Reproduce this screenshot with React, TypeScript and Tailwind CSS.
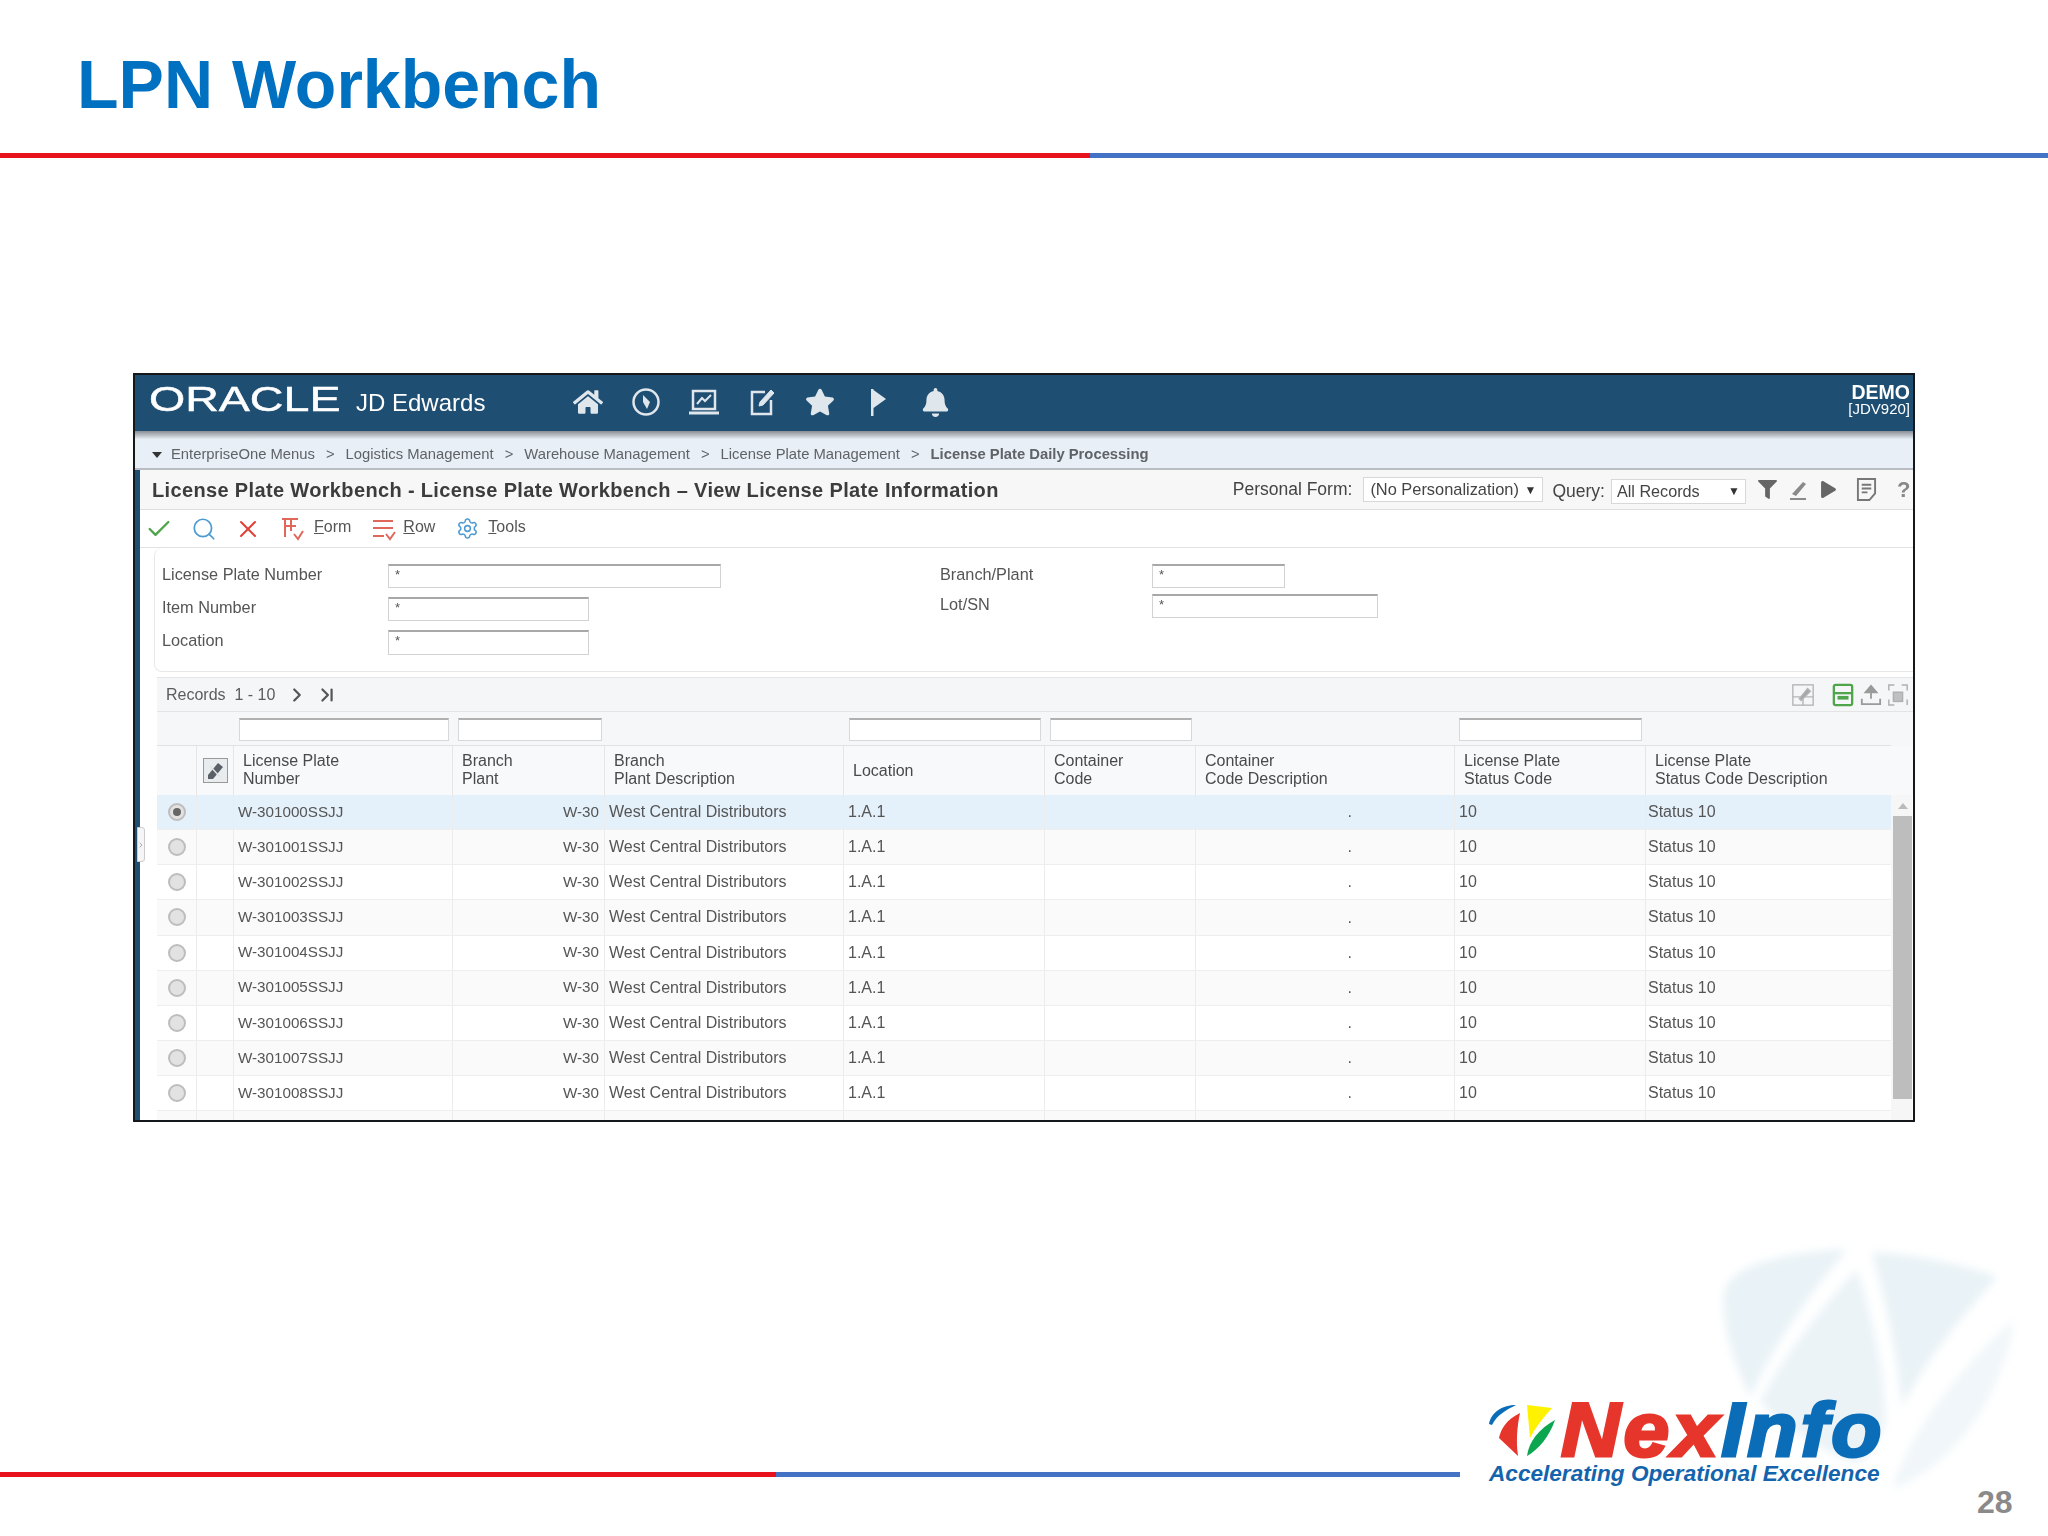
import { Check, ChevronLast, ChevronRight, Search, Settings, X } from "lucide-react";
import { FaBell, FaFilter, FaHome, FaPlay, FaStar } from "react-icons/fa";

const crumbs = [
  "EnterpriseOne Menus",
  "Logistics Management",
  "Warehouse Management",
  "License Plate Management",
];

const rows = ["000", "001", "002", "003", "004", "005", "006", "007", "008"];

const gridCols =
  "grid grid-cols-[40px_37px_219px_152px_239px_201px_151px_259px_191px_245px]";

const Field = ({ className }: { className: string }) => (
  <div
    className={`${className} border border-[#d2d2d2] border-t-2 border-t-[#a8a8a8] bg-white pl-[6px] text-[13px] leading-[18px] text-[#555]`}
  >
    *
  </div>
);

const FilterBox = ({ className }: { className: string }) => (
  <div
    className={`${className} mt-[2px] h-[23px] border border-[#d8d8d8] border-t-2 border-t-[#b0b0b0] bg-white`}
  />
);

const HeaderIcons = () => (
  <div className="ml-[88px] flex -translate-y-[1px] items-center gap-[28px] text-[#dfe6ec]">
    <FaHome className="h-[30px] w-[30px]" />
    <svg viewBox="0 0 30 30" className="h-[30px] w-[30px]" fill="none">
      <circle cx="15" cy="15" r="12.5" stroke="currentColor" strokeWidth="2.5" />
      <path d="M12 8 L19 15 L16 22 L12 15 Z" fill="currentColor" />
    </svg>
    <svg viewBox="0 0 30 30" className="h-[30px] w-[30px]" fill="none" stroke="currentColor">
      <rect x="4" y="4" width="22" height="18" strokeWidth="2.5" />
      <path d="M8 17 L13 11 L16 14 L22 8" strokeWidth="2" />
      <path d="M0 26 H30" strokeWidth="3" />
    </svg>
    <svg viewBox="0 0 30 30" className="h-[30px] w-[30px]" fill="none" stroke="currentColor">
      <path d="M18 5 H5 V27 H24 V13" strokeWidth="2.5" />
      <path d="M12 19 L13 15 L24 3 L27 6 L16 18 Z" fill="currentColor" strokeWidth="1" />
    </svg>
    <FaStar className="h-[30px] w-[30px]" />
    <svg viewBox="0 0 30 30" className="h-[30px] w-[30px]" fill="currentColor">
      <path d="M8 2 H10.5 V29 H8 Z M10.5 3 L23 12 L10.5 21 Z" />
    </svg>
    <FaBell className="h-[29px] w-[29px]" />
  </div>
);

const Toolbar = () => (
  <div className="flex h-[38px] items-center border-b border-[#e2e2e2] pl-[5px] text-[16px] text-[#555]">
    <Check className="h-[28px] w-[28px] text-[#4fa54a]" strokeWidth={2} />
    <Search className="ml-[18px] h-[26px] w-[26px] text-[#4d9bd0]" strokeWidth={1.6} />
    <X className="ml-[17px] h-[28px] w-[28px] text-[#e0433a]" strokeWidth={1.8} />
    <svg viewBox="0 0 26 26" className="ml-[17px] h-[26px] w-[26px]" fill="none" stroke="#e0685a" strokeWidth="2">
      <path d="M3 3 H19 M6 3 V21 M6 10 H17 M12 3 V15" />
      <path d="M15 18 L19 23 L24 15" />
    </svg>
    <span className="ml-[9px] -translate-y-[2px]">
      <span className="underline">F</span>orm
    </span>
    <svg viewBox="0 0 26 26" className="ml-[20px] h-[26px] w-[26px]" fill="none" stroke="#e0685a" strokeWidth="2">
      <path d="M2 5 H22 M2 12 H22 M2 20 H13" />
      <path d="M15 18 L19 23 L24 16" />
    </svg>
    <span className="ml-[6px] -translate-y-[2px]">
      <span className="underline">R</span>ow
    </span>
    <Settings className="ml-[21px] h-[23px] w-[23px] text-[#4d9bd0]" strokeWidth={1.6} />
    <span className="ml-[9px] -translate-y-[2px]">
      <span className="underline">T</span>ools
    </span>
  </div>
);

const GridTools = () => (
  <div className="ml-auto flex items-center pr-[4px]">
    <svg viewBox="0 0 26 26" className="h-[24px] w-[24px]" fill="none" stroke="#b5b5b5" strokeWidth="1.5">
      <rect x="2" y="2" width="22" height="22" />
      <path d="M2 15 H24 M13 15 V24" />
      <path d="M9 17 L18 6 L21 9 L11 19 Z" fill="#a5a5a5" />
    </svg>
    <svg viewBox="0 0 24 26" className="ml-[17px] h-[24px] w-[22px]" fill="none" stroke="#4fa54a" strokeWidth="2.5">
      <rect x="2" y="2" width="20" height="22" rx="2" />
      <path d="M2 11 H22" />
      <path d="M6 16 H18" strokeWidth="4" />
    </svg>
    <svg viewBox="0 0 24 26" className="ml-[6px] h-[24px] w-[22px]" fill="none" stroke="#9a9a9a" strokeWidth="2">
      <path d="M12 17 V5" />
      <path d="M6 10 L12 3 L18 10 Z" fill="#9a9a9a" />
      <path d="M2 17 V23 H22 V17" />
    </svg>
    <svg viewBox="0 0 24 26" className="ml-[5px] h-[24px] w-[22px]" fill="none" stroke="#b0b0b0" strokeWidth="1.6">
      <path d="M2 8 V2 H8 M16 2 H22 V8 M2 18 V24 H8 M22 18 V24" />
      <rect x="7" y="10" width="10" height="10" fill="#c0c0c0" />
    </svg>
  </div>
);

const Grid = () => (
  <div className="flex min-h-0 flex-1 flex-col pl-[17px] text-[16px] text-[#555]">
    <div className="flex h-[35px] items-center border-y border-[#e4e4e4] bg-[#f5f6f8] pl-[9px] text-[#5c5c5c]">
      <span>Records&nbsp; 1 - 10</span>
      <ChevronRight className="ml-[11px] h-[22px] w-[22px] text-[#555]" strokeWidth={2.4} />
      <ChevronLast className="ml-[8px] h-[22px] w-[22px] text-[#555]" strokeWidth={2.4} />
      <GridTools />
    </div>
    <div className="h-[34px] bg-[#f6f7f9]">
      <div className={`${gridCols} h-full w-[1734px] items-center border-b border-[#e2e2e2]`}>
        <div />
        <div />
        <FilterBox className="ml-[5px] w-[210px]" />
        <FilterBox className="ml-[5px] w-[144px]" />
        <div />
        <FilterBox className="ml-[5px] w-[192px]" />
        <FilterBox className="ml-[5px] w-[142px]" />
        <div />
        <FilterBox className="ml-[4px] w-[183px]" />
        <div />
      </div>
    </div>
    <div className="h-[49px] bg-[#f8f9fa]">
      <div className={`${gridCols} h-full w-[1734px] items-center leading-[18px] text-[#4a4a4a]`}>
        <div className="h-full border-r border-[#e6e6e6]" />
        <div className="flex h-full items-center justify-center border-r border-[#e6e6e6]">
          <div className="flex h-[25px] w-[25px] items-center justify-center border border-[#999] bg-[#e9ecef]">
            <svg viewBox="0 0 20 20" className="h-[20px] w-[20px]" fill="#5a6068">
              <path d="M3 14 L13 2 L18 6 L8 18 L3 18 Z" />
              <path d="M5 5 L15 16" stroke="#dfe3e6" strokeWidth="1.5" />
            </svg>
          </div>
        </div>
        <div className="h-full border-r border-[#e6e6e6] pl-[9px] pt-[6px]">License Plate<br />Number</div>
        <div className="h-full border-r border-[#e6e6e6] pl-[9px] pt-[6px]">Branch<br />Plant</div>
        <div className="h-full border-r border-[#e6e6e6] pl-[9px] pt-[6px]">Branch<br />Plant Description</div>
        <div className="flex h-full items-center border-r border-[#e6e6e6] pl-[9px]">Location</div>
        <div className="h-full border-r border-[#e6e6e6] pl-[9px] pt-[6px]">Container<br />Code</div>
        <div className="h-full border-r border-[#e6e6e6] pl-[9px] pt-[6px]">Container<br />Code Description</div>
        <div className="h-full border-r border-[#e6e6e6] pl-[9px] pt-[6px]">License Plate<br />Status Code</div>
        <div className="h-full pl-[9px] pt-[6px]">License Plate<br />Status Code Description</div>
      </div>
    </div>
    <div className="flex min-h-0 flex-1 overflow-hidden">
      <div className="w-[1734px]">
        {rows.map((r, i) => (
          <div
            key={r}
            className={`${gridCols} h-[35.15px] items-center border-b border-[#eeeeee] ${
              i === 0 ? "bg-[#e4f0fa]" : i % 2 === 1 ? "bg-[#fafafa]" : "bg-white"
            }`}
          >
            <div className="flex h-full items-center justify-center border-r border-[#ececec]">
              <div className="flex h-[18px] w-[18px] items-center justify-center rounded-full border-2 border-[#bdbdbd] bg-[#e2e2e2]">
                {i === 0 && <div className="h-[8px] w-[8px] rounded-full bg-[#666]" />}
              </div>
            </div>
            <div className="h-full border-r border-[#ececec]" />
            <div className="flex h-full items-center border-r border-[#ececec] pl-[4px] text-[15.2px]">W-301{r}SSJJ</div>
            <div className="flex h-full items-center justify-end border-r border-[#ececec] pr-[5px] text-[15.2px]">W-30</div>
            <div className="flex h-full items-center border-r border-[#ececec] pl-[4px]">West Central Distributors</div>
            <div className="flex h-full items-center border-r border-[#ececec] pl-[4px]">1.A.1</div>
            <div className="h-full border-r border-[#ececec]" />
            <div className="flex h-full items-end justify-end border-r border-[#ececec] pb-[5px] pr-[102px]">.</div>
            <div className="flex h-full items-center border-r border-[#ececec] pl-[4px]">10</div>
            <div className="flex h-full items-center pl-[2px]">Status 10</div>
          </div>
        ))}
        {/* the tenth row is cut off by the window edge, as in the reference */}
        <div className={`${gridCols} h-[10px] bg-[#fafafa]`}>
          <div className="border-r border-[#ececec]" />
          <div className="border-r border-[#ececec]" />
          <div className="border-r border-[#ececec]" />
          <div className="border-r border-[#ececec]" />
          <div className="border-r border-[#ececec]" />
          <div className="border-r border-[#ececec]" />
          <div className="border-r border-[#ececec]" />
          <div className="border-r border-[#ececec]" />
          <div className="border-r border-[#ececec]" />
          <div />
        </div>
      </div>
      <div className="flex w-[21px] flex-col items-center bg-[#f6f6f6] pl-[2px]">
        <div className="mt-[8px] h-0 w-0 border-x-[5px] border-b-[6px] border-x-transparent border-b-[#bbb]" />
        <div className="mt-[7px] h-[283px] w-full bg-[#bdbdbd]" />
      </div>
    </div>
  </div>
);

const AppWindow = () => (
  <div className="relative ml-[133px] mt-[215px] flex h-[749px] w-[1782px] flex-col overflow-hidden border-2 border-[#15181b] bg-white blur-[0.4px]">
    <div className="flex h-[56px] shrink-0 items-center bg-[#1f4e73] pl-[14px] font-['Liberation_Sans',sans-serif] text-white">
      <span className="w-[199px] origin-left -translate-y-[5px] scale-x-[1.33] text-[35px] leading-none [-webkit-text-stroke:0.5px_white]">
        ORACLE
      </span>
      <span className="ml-[8px] text-[24px]">JD Edwards</span>
      <HeaderIcons />
      <div className="ml-auto -translate-y-[4px] pr-[3px] text-right">
        <div className="text-[19.5px] font-bold leading-[18px]">DEMO</div>
        <div className="text-[15px] leading-[15px]">[JDV920]</div>
      </div>
    </div>
    <div className="h-[8px] shrink-0 bg-gradient-to-b from-[#8b8f94] to-[#e6ecf3]" />
    <div className="flex min-h-0 flex-1 flex-col border-l-[5px] border-[#1f4e73] font-['Liberation_Sans',sans-serif]">
      <div className="-ml-[5px] flex h-[31px] shrink-0 items-center gap-[11px] border-b-2 border-[#b9bdc2] bg-[#e9eff6] pl-[17px] pt-[2px] text-[14.8px] text-[#5f6368]">
        <span className="mr-[-2px] h-0 w-0 border-x-[5px] border-t-[6px] border-x-transparent border-t-[#333]" />
        {crumbs.map((c) => (
          <div key={c} className="flex items-center gap-[11px]">
            <span>{c}</span>
            <span>&gt;</span>
          </div>
        ))}
        <span className="font-bold">License Plate Daily Processing</span>
      </div>
      <div className="flex h-[40px] shrink-0 items-center border-b border-[#dedede] bg-[#f7f7f7] pl-[12px] text-[#444]">
        <span className="text-[20px] font-bold tracking-[0.35px] text-[#3c3c3c]">
          License Plate Workbench - License Plate Workbench – View License Plate Information
        </span>
        <span className="ml-[234px] text-[17.5px]">Personal Form:</span>
        <div className="ml-[11px] flex h-[25px] w-[180px] items-center justify-between border border-[#d8d8d8] bg-white px-[6px] text-[16.4px]">
          (No Personalization) <span className="text-[12px] text-[#333]">▼</span>
        </div>
        <span className="ml-[9px] mt-[3px] text-[17.5px]">Query:</span>
        <div className="ml-[6px] mt-[3px] flex h-[25px] w-[135px] items-center justify-between border border-[#d8d8d8] bg-white px-[5px] text-[16.2px]">
          All Records <span className="text-[12px] text-[#333]">▼</span>
        </div>
        <FaFilter className="ml-[12px] h-[19px] w-[19px] text-[#666]" />
        <svg viewBox="0 0 22 22" className="ml-[10px] h-[22px] w-[22px]" fill="#8a8a8a">
          <path d="M5 15 L16 3 L19 5 L9 17 Z M3 19 H19 V21 H3 Z" />
        </svg>
        <FaPlay className="ml-[11px] h-[17px] w-[17px] text-[#666]" />
        <svg viewBox="0 0 22 26" className="ml-[19px] h-[25px] w-[21px]" fill="none" stroke="#777" strokeWidth="2">
          <path d="M2 2 H20 V17 L14 24 H2 Z M6 8 H16 M6 12 H16 M6 16 H12" />
        </svg>
        <span className="ml-[20px] text-[22px] font-bold text-[#888]">?</span>
      </div>
      <Toolbar />
      <div className="ml-[14px] flex h-[124px] shrink-0 rounded-l-[8px] border-b border-l border-[#e8e8e8] pt-[16px] text-[16.3px] text-[#555]">
        <div className="flex w-[785px] flex-col">
          <div className="flex h-[33px]">
            <span className="w-[233px] pl-[7px] leading-[20px]">License Plate Number</span>
            <Field className="h-[24px] w-[333px]" />
          </div>
          <div className="flex h-[33px]">
            <span className="w-[233px] pl-[7px] leading-[20px]">Item Number</span>
            <Field className="h-[24px] w-[201px]" />
          </div>
          <div className="flex h-[33px]">
            <span className="w-[233px] pl-[7px] leading-[20px]">Location</span>
            <Field className="h-[25px] w-[201px]" />
          </div>
        </div>
        <div className="flex flex-col">
          <div className="flex h-[30px]">
            <span className="w-[212px] leading-[20px]">Branch/Plant</span>
            <Field className="h-[24px] w-[133px]" />
          </div>
          <div className="flex h-[30px]">
            <span className="w-[212px] leading-[20px]">Lot/SN</span>
            <Field className="h-[24px] w-[226px]" />
          </div>
        </div>
      </div>
      <div className="h-[5px] shrink-0" />
      <Grid />
    </div>
    <div className="absolute left-[2px] top-[452px] flex h-[35px] w-[8px] items-center justify-center rounded-r-[3px] border border-[#ccc] bg-[#f5f5f5]">
      <ChevronRight className="h-[10px] w-[8px] shrink-0 text-[#888]" strokeWidth={2} />
    </div>
  </div>
);

const Logo = () => (
  <div className="relative ml-[29px] w-[392px] font-['Liberation_Sans',sans-serif] italic">
    <div className="flex h-[60px] items-center overflow-visible">
      <svg viewBox="0 0 66 55" className="h-[55px] w-[66px] shrink-0">
        <path d="M0 21 C2 9 14 2 27 2 C17 7 8 12 3 22 Z" fill="#0b6db8" />
        <path d="M31 10 C17 17 12 26 10 35 L29 53 C27 38 28 24 31 10 Z" fill="#e6352b" />
        <path d="M38 2 L63 5 C54 15 46 25 41 35 Z" fill="#fff200" />
        <path d="M66 17 C50 26 40 38 38 53 C50 46 60 34 66 17 Z" fill="#0ca650" />
      </svg>
      <span className="ml-[6px] origin-left scale-x-[1.08] whitespace-nowrap text-[76px] font-bold leading-[56px] tracking-[3px] text-[#e6352b] [-webkit-text-stroke:3px_#e6352b]">
        Nex<span className="text-[#0b6db8] [-webkit-text-stroke:3px_#0b6db8]">Info</span>
      </span>
    </div>
    <div className="mt-[1px] whitespace-nowrap text-[22.6px] font-bold leading-[26px] text-[#1464ad]">
      Accelerating Operational Excellence
    </div>
  </div>
);

const App = () => (
  <div className="relative h-[1536px] w-[2048px] overflow-hidden bg-white font-['Liberation_Sans',sans-serif]">
    {/* watermark behind the logo */}
    <svg viewBox="0 0 300 245" className="absolute left-[1722px] top-[1247px] h-[245px] w-[300px] blur-[4px]">
      <path d="M2 45 C10 15 70 5 125 2 C85 50 50 100 28 150 C10 110 0 80 2 45 Z" fill="#e9f2f6" />
      <path d="M150 5 C200 8 250 20 275 30 C240 70 205 110 180 160 C175 100 162 50 150 5 Z" fill="#e9f2f6" />
      <path d="M135 22 C150 70 165 130 163 178 C150 205 140 220 130 215 C90 200 50 170 38 155 C60 110 100 60 135 22 Z" fill="#ebf3f7" />
      <path d="M292 72 C282 140 240 215 170 242 C190 180 240 120 292 72 Z" fill="#f0f6f9" />
    </svg>
    <div className="relative flex h-[153px] items-start pl-[77px] pt-[42px]">
      <h1 className="text-[68px] font-bold leading-[84px] text-[#0070c0]">LPN Workbench</h1>
    </div>
    <div className="relative flex h-[5px]">
      <div className="w-[1090px] bg-[#e8121c]" />
      <div className="flex-1 bg-[#4472c4]" />
    </div>
    <AppWindow />
    <div className="relative mt-[278px] flex items-start">
      <div className="mt-[72px] flex h-[5px] w-[1460px]">
        <div className="w-[776px] bg-[#e8121c]" />
        <div className="flex-1 bg-[#4472c4]" />
      </div>
      <Logo />
      <span className="ml-[96px] mt-[84px] text-[32px] font-bold leading-[36px] text-[#8a8a8a]">28</span>
    </div>
  </div>
);

export default App;
